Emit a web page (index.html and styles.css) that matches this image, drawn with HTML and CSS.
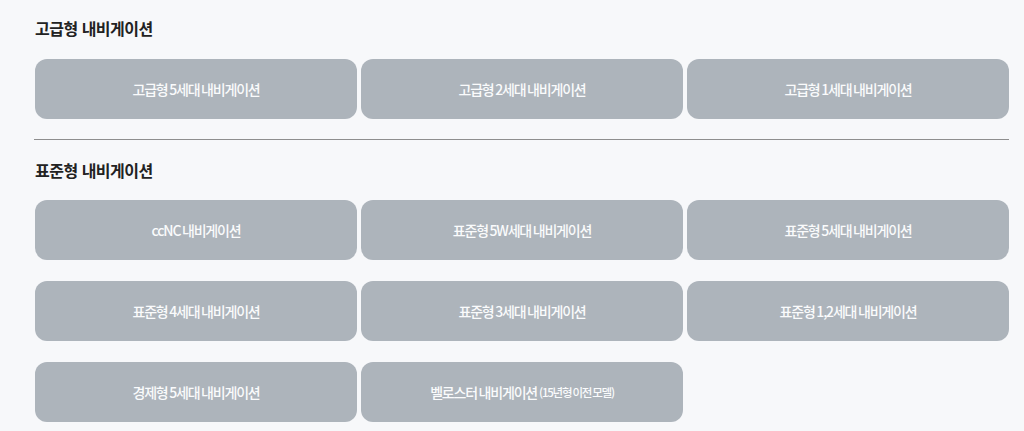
FILE: index.html
```html
<!DOCTYPE html>
<html lang="ko">
<head>
  <meta charset="UTF-8">
  <meta name="viewport" content="width=device-width, initial-scale=1.0">
  <title>내비게이션</title>
  <link rel="stylesheet" href="styles.css">
</head>
<body>
  <div class="container">
    <section class="group">
      <h3>고급형 내비게이션</h3>
      <div class="grid">
        <a class="nav-btn" href="#">고급형 5세대 내비게이션</a>
        <a class="nav-btn" href="#">고급형 2세대 내비게이션</a>
        <a class="nav-btn" href="#">고급형 1세대 내비게이션</a>
      </div>
    </section>

    <hr class="divider">

    <section class="group">
      <h3>표준형 내비게이션</h3>
      <div class="grid">
        <a class="nav-btn" href="#">ccNC 내비게이션</a>
        <a class="nav-btn" href="#">표준형 5W세대 내비게이션</a>
        <a class="nav-btn" href="#">표준형 5세대 내비게이션</a>
        <a class="nav-btn" href="#">표준형 4세대 내비게이션</a>
        <a class="nav-btn" href="#">표준형 3세대 내비게이션</a>
        <a class="nav-btn" href="#">표준형 1,2세대 내비게이션</a>
        <a class="nav-btn" href="#">경제형 5세대 내비게이션</a>
        <a class="nav-btn" href="#">벨로스터 내비게이션<small>(15년형 이전 모델)</small></a>
      </div>
    </section>
  </div>
</body>
</html>
```

FILE: styles.css
```css
body {
  margin: 0;
  background: #f7f8fa;
  font-family: "Noto Sans CJK KR", "Noto Sans", sans-serif;
  color: #222;
}
.container {
  width: 974px;
  margin: 0 0 0 35px;
  padding-top: 17px;
}
h3 {
  margin: 0 0 19px;
  font-size: 16px;
  font-weight: 700;
  letter-spacing: -0.5px;
  line-height: 22px;
}
.grid {
  display: grid;
  grid-template-columns: repeat(3, 1fr);
  column-gap: 4px;
  row-gap: 21px;
}
.nav-btn {
  display: flex;
  align-items: center;
  justify-content: center;
  height: 60px;
  background-color: #adb4bb;
  border-radius: 12px;
  color: #fafbfc;
  text-decoration: none;
  font-size: 14px;
  font-weight: 500;
  letter-spacing: -1.2px;
  word-spacing: -1px;
}
.group:first-child .nav-btn {
  margin-top: 1px;
}
.nav-btn small {
  font-size: 11.5px;
  margin-left: 2px;
}
.divider {
  border: none;
  border-top: 1px solid #8e8e8e;
  margin: 20px 0 19px -1px;
}
```
